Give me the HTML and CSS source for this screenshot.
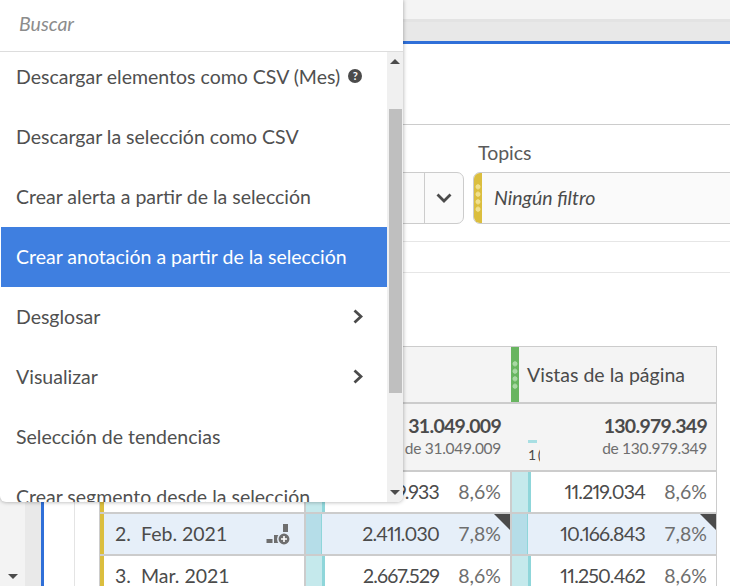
FILE: index.html
```html
<!DOCTYPE html>
<html>
<head lang="en">
    <meta charset="UTF-8">
    <title>Tabla</title>
    <link rel="stylesheet" href="styles.css">
</head>
<body>
<div class="topbar"></div>
<div class="tabbar"></div>
<div class="workspace">
    <div class="rail">
        <div class="rail-a"><svg class="arrow rail-arrow" viewBox="0 0 10 5"><path d="M0 0h10L5 5z"/></svg></div>
        <div class="rail-b"></div>
    </div>
    <div class="panel">
        <div class="panel-head"></div>
        <div class="filters">
            <div class="filter filter-first">
                <div class="filter-label">&nbsp;</div>
                <div class="filter-box">
                    <div class="filter-value"></div>
                    <div class="filter-chevron">
                        <svg class="chev-down" viewBox="0 0 16 10"><path d="M1.5 1.5L8 8l6.5-6.5"/></svg>
                    </div>
                </div>
            </div>
            <div class="filter filter-second">
                <div class="filter-label">Topics</div>
                <div class="filter-box">
                    <div class="handle handle-yellow"></div>
                    <div class="filter-value">Ningún filtro</div>
                </div>
            </div>
        </div>
        <div class="band"></div>
        <div class="table-wrap">
            <div class="table-gutter">
            <div class="table">
                <div class="row row-head">
                    <div class="cell-dim"></div>
                    <div class="cell-metric cell-blank"></div>
                    <div class="cell-metric cell-blank">
                        <div class="handle handle-green"></div>
                        <div class="metric-name">Vistas de la página</div>
                    </div>
                </div>
                <div class="row row-total">
                    <div class="cell-dim"></div>
                    <div class="cell-metric cell-blank">
                        <div class="spark"></div>
                        <div class="totals">
                            <div class="total-num">31.049.009</div>
                            <div class="total-of">de 31.049.009</div>
                        </div>
                    </div>
                    <div class="cell-metric cell-blank">
                        <div class="spark">
                            <div class="spark-bar"></div>
                            <div class="spark-label">1 (</div>
                        </div>
                        <div class="totals">
                            <div class="total-num">130.979.349</div>
                            <div class="total-of">de 130.979.349</div>
                        </div>
                    </div>
                </div>
                <div class="row row-data">
                    <div class="cell-dim"><span class="idx">1.</span><span>Ene. 2021</span></div>
                    <div class="cell-metric"><div class="bar"></div><div class="num">2.669.933</div><div class="pct">8,6%</div></div>
                    <div class="cell-metric"><div class="bar"></div><div class="num">11.219.034</div><div class="pct">8,6%</div></div>
                </div>
                <div class="row row-data row-selected">
                    <div class="cell-dim"><span class="idx">2.</span><span>Feb. 2021</span>
                        <svg class="breakdown" viewBox="0 0 24 23">
                            <path d="M0.5 16h6v4h-6zM8 12h5v8H8zM17 1h5v8h-5z"/>
                            <circle class="ring" cx="18" cy="16" r="6.2"/>
                            <path class="plus" d="M18 13v6M15 16h6"/>
                        </svg>
                    </div>
                    <div class="cell-metric"><div class="bar"></div><div class="num">2.411.030</div><div class="pct">7,8%</div><div class="corner"></div></div>
                    <div class="cell-metric"><div class="bar"></div><div class="num">10.166.843</div><div class="pct">7,8%</div><div class="corner"></div></div>
                </div>
                <div class="row row-data">
                    <div class="cell-dim"><span class="idx">3.</span><span>Mar. 2021</span></div>
                    <div class="cell-metric"><div class="bar"></div><div class="num">2.667.529</div><div class="pct">8,6%</div></div>
                    <div class="cell-metric"><div class="bar"></div><div class="num">11.250.462</div><div class="pct">8,6%</div></div>
                </div>
            </div>
            </div>
        </div>
    </div>
</div>

<div class="menu">
    <div class="menu-search">Buscar</div>
    <div class="menu-body">
        <div class="menu-list">
            <div class="menu-item">Descargar elementos como CSV (Mes)<span class="help">?</span></div>
            <div class="menu-item">Descargar la selección como CSV</div>
            <div class="menu-item">Crear alerta a partir de la selección</div>
            <div class="menu-item menu-item-active">Crear anotación a partir de la selección</div>
            <div class="menu-item menu-item-sub">Desglosar
                <svg class="chev-right" viewBox="0 0 10 15"><path d="M1.5 1.5L8 7.5l-6.5 6"/></svg>
            </div>
            <div class="menu-item menu-item-sub">Visualizar
                <svg class="chev-right" viewBox="0 0 10 15"><path d="M1.5 1.5L8 7.5l-6.5 6"/></svg>
            </div>
            <div class="menu-item">Selección de tendencias</div>
            <div class="menu-item">Crear segmento desde la selección</div>
        </div>
        <div class="menu-scroll">
            <svg class="arrow" viewBox="0 0 10 5"><path d="M0 5h10L5 0z"/></svg>
            <div class="menu-track"><div class="menu-thumb"></div></div>
            <svg class="arrow" viewBox="0 0 10 5"><path d="M0 0h10L5 5z"/></svg>
        </div>
    </div>
    <div class="menu-notch"></div>
</div>
</body>
</html>
```

FILE: styles.css
```css
html, body {
    margin: 0;
    width: 730px;
    height: 586px;
    overflow: hidden;
    background-color: #ffffff;
}

body {
    color: #4b4b4b;
    font-family: "Lato", "Open Sans", sans-serif;
    font-size: 19.5px;
}

.topbar {
    height: 19px;
    background-color: #f4f4f4;
    border-bottom: 3px solid #e3e3e3;
}

.tabbar {
    height: 19px;
    background-color: #e8e8e8;
    border-bottom: 3px solid #2f6fd8;
}

.workspace {
    display: flex;
    height: 542px;
}

.rail {
    display: flex;
    flex: none;
    width: 41px;
}

.rail-a {
    position: relative;
    width: 25px;
    background-color: #f3f3f3;
}

.rail-b {
    width: 16px;
    background-color: #e9e9e9;
}

.rail-arrow {
    position: absolute;
    left: 8px;
    top: 530px;
}

.arrow {
    display: block;
    width: 10px;
    height: 5px;
    fill: #4b4b4b;
}

.panel {
    flex: 1;
    min-width: 0;
    border-left: 3px solid #2f6fd8;
}

.panel-head {
    height: 80px;
    border-bottom: 1px solid #cccccc;
}

.filters {
    display: flex;
    gap: 9px;
    padding: 15px 0 17px 196px;
    border-bottom: 1px solid #e6e6e6;
}

.filter-first {
    flex: none;
    width: 224px;
}

.filter-second {
    flex: none;
    width: 320px;
}

.filter-label {
    height: 32px;
    padding-left: 5px;
    line-height: 26px;
    color: #5a5a5a;
}

.filter-box {
    display: flex;
    align-items: center;
    height: 50px;
    background-color: #fafafa;
    border: 1px solid #cccccc;
    border-radius: 7px;
    overflow: hidden;
}

.filter-value {
    flex: 1;
    padding: 0 0 2px 12px;
    font-style: italic;
}

.filter-chevron {
    display: flex;
    align-items: center;
    justify-content: center;
    flex: none;
    width: 38px;
    height: 100%;
    border-left: 1px solid #cccccc;
}

.chev-down {
    width: 16px;
    height: 10px;
    fill: none;
    stroke: #4b4b4b;
    stroke-width: 2.8;
}

.handle {
    display: flex;
    align-items: center;
    flex: none;
    width: 8px;
    height: 100%;
    background-color: #dbbe3e;
}

.handle::before {
    content: "";
    width: 8px;
    height: 30px;
    background-image: radial-gradient(circle, #f0e08e 2.2px, transparent 2.8px);
    background-size: 8px 7.5px;
    background-repeat: repeat-y;
}

.handle-green {
    margin-left: 1px;
    background-color: #68b560;
}

.handle-green::before {
    background-image: radial-gradient(circle, #a9d8a4 2.2px, transparent 2.8px);
}

.band {
    height: 30px;
    border-bottom: 1px solid #e6e6e6;
}

.table-wrap {
    padding: 73px 0 0 30px;
}

.table-gutter {
    padding-left: 24px;
    border-left: 1px solid #e4e4e4;
}

.table {
    width: 616px;
    border-left: 1px solid #cccccc;
    border-right: 1px solid #cccccc;
    border-top: 1px solid #cccccc;
}

.row {
    display: grid;
    grid-template-columns: 204px 206px 206px;
}

.row-head {
    height: 55px;
    background-color: #f4f4f4;
    border-bottom: 2px solid #cccccc;
}

.row-total {
    height: 66px;
    background-color: #f4f4f4;
    border-bottom: 2px solid #cccccc;
}

.row-data {
    height: 40px;
    border-bottom: 2px solid #cccccc;
}

.row-selected {
    background-color: #e6eff9;
}

.cell-dim {
    display: flex;
    align-items: center;
}

.row-data .cell-dim {
    border-left: 4px solid #dbbe3e;
    padding: 0 0 2px 11px;
}

.idx {
    width: 26px;
}

.breakdown {
    width: 24px;
    height: 23px;
    margin: 2px 14px 0 auto;
    fill: #6e6e6e;
}

.breakdown .ring {
    stroke: #e6eff9;
    stroke-width: 1.5;
}

.breakdown .plus {
    fill: none;
    stroke: #ffffff;
    stroke-width: 1.6;
}

.cell-metric {
    position: relative;
    display: flex;
    align-items: center;
    border-left: 2px solid #cccccc;
}

.cell-blank {
    border-left: none;
}

.metric-name {
    padding-left: 8px;
}

.spark {
    flex: none;
    box-sizing: border-box;
    width: 30px;
    height: 100%;
    padding-left: 18px;
    overflow: hidden;
}

.spark-bar {
    width: 9px;
    height: 3px;
    margin-top: 36px;
    background-color: #a8dfe3;
}

.spark-label {
    margin-top: 3px;
    font-size: 14px;
    line-height: 18px;
    word-spacing: -2px;
    white-space: nowrap;
}

.totals {
    flex: 1;
    align-self: flex-start;
    padding: 10px 9px 0 0;
    text-align: right;
}

.total-num {
    font-weight: 700;
    line-height: 24px;
    letter-spacing: -0.7px;
}

.total-of {
    font-size: 15.5px;
    line-height: 20px;
    letter-spacing: -0.3px;
    color: #6e6e6e;
}

.bar {
    flex: none;
    width: 19px;
    height: 100%;
    background-color: #c5e9ec;
    border-right: 3px solid #8fd6da;
    box-sizing: border-box;
}

.row-selected .bar {
    background-color: #b5dde8;
    border-right: 3px solid #e6eff9;
    box-shadow: inset -1px 0 0 #8fd6da;
}

.num {
    flex: 1;
    padding-bottom: 2px;
    font-variant-numeric: proportional-nums;
    letter-spacing: -0.8px;
    text-align: right;
}

.pct {
    flex: none;
    width: 71px;
    padding: 0 9px 2px 0;
    box-sizing: border-box;
    text-align: right;
    color: #6e6e6e;
}

.corner {
    position: absolute;
    top: 0;
    right: 0;
    border-top: 16px solid #4b4b4b;
    border-left: 16px solid transparent;
}

/* menu over the table */
.menu {
    position: absolute;
    left: 0;
    top: 0;
    width: 403px;
    height: 502px;
    background-color: #ffffff;
    border-radius: 0 0 6px 6px;
    box-shadow: 0 0 4px rgba(0, 0, 0, 0.35);
}

.menu-search {
    height: 51px;
    padding-left: 19px;
    border-bottom: 1px solid #dddddd;
    font-style: italic;
    line-height: 47px;
    color: #8c8c8c;
}

.menu-body {
    display: flex;
    height: 450px;
}

.menu-list {
    flex: 1;
    min-width: 0;
    height: 450px;
    overflow: hidden;
    padding-left: 1px;
    border-radius: 0 0 0 6px;
}

.menu-item {
    display: flex;
    align-items: center;
    box-sizing: border-box;
    height: 60px;
    padding: 0 16px 2px 15px;
    color: #505050;
}

.menu-item:first-child {
    margin-top: -5px;
}

.menu-item-active {
    background-color: #3f7fe0;
    color: #ffffff;
}

.menu-item-sub {
    justify-content: space-between;
}

.help {
    flex: none;
    width: 14px;
    height: 14px;
    margin: -1px 0 0 8px;
    border-radius: 50%;
    background-color: #4b4b4b;
    color: #ffffff;
    font-size: 11px;
    font-weight: 700;
    line-height: 14px;
    text-align: center;
}

.chev-right {
    width: 10px;
    height: 15px;
    margin-right: 8px;
    fill: none;
    stroke: #4b4b4b;
    stroke-width: 2.8;
}

.menu-scroll {
    display: flex;
    flex: none;
    flex-direction: column;
    align-items: center;
    width: 16px;
    padding: 7px 0;
    box-sizing: border-box;
    background-color: #f0f0f0;
    border-radius: 0 0 6px 0;
}

.menu-track {
    flex: 1;
    width: 13px;
    padding-top: 45px;
}

.menu-thumb {
    height: 284px;
    background-color: #bfbfbf;
}

.menu-notch {
    position: absolute;
    left: 190px;
    top: 497px;
    width: 14px;
    height: 14px;
    background-color: #ffffff;
    transform: rotate(45deg);
    box-shadow: 1px 1px 2px rgba(0, 0, 0, 0.2);
    z-index: -1;
}
```
